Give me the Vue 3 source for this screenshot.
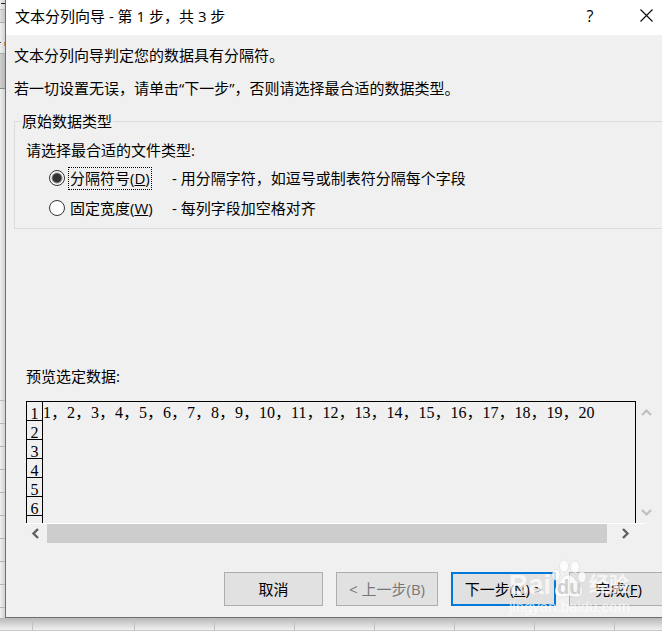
<script setup>
import { ref } from 'vue'

const fileType = ref('delimited')
const rows = [1, 2, 3, 4, 5, 6]
const preview = Array.from({ length: 20 }, (_, i) => i + 1).join('，')
</script>

<template>
  <div class="sheet">
    <div class="edge">
      <span class="ribbon"></span>
      <span class="tab"></span>
      <span class="formula"></span>
      <span class="header"></span>
      <span class="blank"></span>
      <span class="cells"></span>
    </div>
    <main class="dialog" role="dialog" aria-labelledby="title">
      <header class="titlebar">
        <h1 id="title">文本分列向导 - 第 1 步，共 3 步</h1>
        <button class="cap help" aria-label="帮助">?</button>
        <button class="cap" aria-label="关闭">
          <svg width="13" height="13" viewBox="0 0 13 13"><path d="M.5.5l12 12M12.5.5l-12 12" fill="none" stroke="#111" stroke-width="1.2" /></svg>
        </button>
      </header>
      <p class="intro">文本分列向导判定您的数据具有分隔符。</p>
      <p class="intro">若一切设置无误，请单击“下一步”，否则请选择最合适的数据类型。</p>

      <fieldset class="group">
        <legend>原始数据类型</legend>
        <p class="prompt">请选择最合适的文件类型:</p>
        <div class="choice">
          <input id="delimited" v-model="fileType" type="radio" name="type" value="delimited" />
          <label for="delimited" class="focused">分隔符号(<u>D</u>)</label>
          <span>- 用分隔字符，如逗号或制表符分隔每个字段</span>
        </div>
        <div class="choice">
          <input id="fixed" v-model="fileType" type="radio" name="type" value="fixed" />
          <label for="fixed">固定宽度(<u>W</u>)</label>
          <span>- 每列字段加空格对齐</span>
        </div>
      </fieldset>

      <section class="preview">
        <h2>预览选定数据:</h2>
        <div class="viewer">
          <div class="pane">
            <table>
              <tbody>
                <tr v-for="n in rows" :key="n">
                  <th>{{ n }}</th>
                  <td>{{ n === 1 ? preview : '' }}</td>
                </tr>
                <tr><th></th><td></td></tr>
              </tbody>
            </table>
          </div>
          <div class="vscroll">
            <button aria-label="向上滚动"><svg width="11" height="9" viewBox="0 0 11 9"><path d="M1 7l4.500-4.500L10 7" fill="none" stroke="#bfbfbf" stroke-width="2.200" /></svg></button>
            <button aria-label="向下滚动"><svg width="11" height="9" viewBox="0 0 11 9"><path d="M1 2l4.500 4.500L10 2" fill="none" stroke="#bfbfbf" stroke-width="2.200" /></svg></button>
          </div>
        </div>
        <div class="hscroll">
          <button aria-label="向左滚动"><svg width="9" height="11" viewBox="0 0 9 11"><path d="M7 1L2.500 5.500L7 10" fill="none" stroke="#606060" stroke-width="2.400" /></svg></button>
          <div class="thumb"></div>
          <button aria-label="向右滚动"><svg width="9" height="11" viewBox="0 0 9 11"><path d="M2 1l4.500 4.500L2 10" fill="none" stroke="#606060" stroke-width="2.400" /></svg></button>
        </div>
      </section>

      <footer class="actions">
        <button class="btn cancel">取消</button>
        <button class="btn back" disabled>&lt; 上一步(B)</button>
        <button class="btn next">下一步(<u>N</u>) &gt;</button>
        <button class="btn finish">完成(<u>F</u>)</button>
      </footer>
    </main>
    <div class="bottom-cells"></div>

    <div class="watermark" aria-hidden="true">
      <div class="brand">
        <span>Bai</span>
        <svg width="36" height="40" viewBox="0 0 36 40">
          <ellipse cx="5" cy="16" rx="4" ry="5.500" />
          <ellipse cx="13" cy="7" rx="4.500" ry="6" />
          <ellipse cx="24" cy="8" rx="4.500" ry="6" />
          <ellipse cx="31" cy="18" rx="4" ry="5.500" />
          <path d="M17 16c-5 0-6 5-10 9c-5 5-4 13 3 13c4 0 5-1 8-1c3 0 4 1 8 1c7 0 7-9 2-13c-4-4-6-9-11-9z" />
          <text x="6" y="35">du</text>
        </svg>
        <span class="cn">经验</span>
      </div>
      <div class="site">jingyan.baidu.com</div>
    </div>
  </div>
</template>

<style>
body { overflow: hidden; background: #fff; }
</style>

<style scoped>
* { box-sizing: border-box; }
.sheet {
  position: relative;
  display: grid;
  grid-template-columns: 5px minmax(0, 1fr);
  overflow: hidden;
  background: #f1f1f1;
  color: #000;
  font: 15px/20px "Open Sans", "Noto Sans CJK SC", sans-serif;
}
h1, h2, p { margin: 0; font-size: 15px; font-weight: 400; }
button { font: inherit; color: inherit; padding: 0; border: 0; background: none; }
.edge { display: flex; flex-direction: column; overflow: hidden; background: linear-gradient(90deg, #efefef, #d2d2d2); }
.ribbon { height: 10px; border-bottom: 1px solid #bbb; background: linear-gradient(#222, #222) 1px 3px / 4px 1px no-repeat; }
.tab { height: 13px; background: #0001; border-bottom: 1px solid #aaa; }
.formula { height: 31px; border-bottom: 1px solid #aaa; background: linear-gradient(#c68a4a, #c68a4a) 4px 19px / 1px 4px no-repeat, linear-gradient(#345, #345) 0 19px / 1px 1px no-repeat; }
.header { height: 35px; background: #0002; border-bottom: 1px solid #888; }
.blank { height: 312px; border-bottom: 1px solid #bcbcbc; }
.cells { flex: 1; background: repeating-linear-gradient(transparent 0 22px, #b6b6b6 22px 23px); }
.dialog {
  background: #f0f0f0;
  border-left: 1px solid #6f6f6f;
  border-bottom: 1px solid #6f6f6f;
}
.titlebar { display: flex; align-items: center; height: 35px; padding-left: 9px; background: #fff; }
.titlebar h1 { flex: 1; padding-bottom: 4px; }
.cap { display: grid; place-items: center; width: 31px; height: 31px; margin-bottom: 4px; }
.help { width: 82px; font-size: 16px; }
.intro { padding: 10px 8px 3px; white-space: nowrap; }
.group { margin: 10px 0 0 8px; padding: 9px 0 8px 11px; min-width: 0; border: 1px solid #dcdcdc; border-right: 0; white-space: nowrap; }
legend { margin-left: -5px; padding: 0 1px; line-height: 20px; }
.prompt { margin-bottom: 6px; }
.choice { display: grid; grid-template-columns: 20px 103px 1fr; align-items: center; height: 24px; margin: 0 0 6px 23px; }
.choice:last-child { margin-bottom: 0; }
.choice input { appearance: none; width: 16px; height: 16px; margin: 0; border: 1px solid #333; border-radius: 50%; background: #fff; }
.choice input:checked { background: radial-gradient(circle, #333 0 4px, #fff 6px); }
.choice label { justify-self: start; line-height: 21px; padding: 0 1px; border: 1px solid transparent; margin-left: -1px; }
.choice .focused { border: 1px dotted #000; }
.preview { padding: 137px 0 0 20px; }
.viewer { display: flex; margin-top: 15px; }
.pane { flex: 1; height: 122px; overflow: hidden; border: 1px solid #000; border-bottom: 0; }
table { width: 100%; border-spacing: 0; font: 16px/18px "Liberation Serif", "Noto Sans CJK SC", serif; }
tr { height: 19px; }
th { width: 16px; padding: 6px 0 0; border-right: 1px solid #000; border-bottom: 1px solid #000; font-weight: 400; line-height: 12px; }
td { padding: 2px 0 0; line-height: 17px; white-space: nowrap; }
.vscroll { display: flex; flex-direction: column; justify-content: space-between; width: 26px; padding: 0 5px 0 0; }
.vscroll button { height: 22px; display: grid; place-items: center; }
.hscroll { display: flex; height: 20px; margin-right: 17px; border-top: 1px solid #fff; }
.hscroll button { display: grid; place-items: center; width: 21px; padding-right: 2px; }
.hscroll button:last-child { width: 38px; }
.thumb { flex: 1; background: #cdcdcd; }
.actions { display: flex; gap: 13px; justify-content: flex-end; margin-right: -6px; padding: 29px 0 11px; }
.btn { height: 34px; flex: none; border: 1px solid #adadad; background: #e1e1e1; white-space: nowrap; }
.cancel, .finish { width: 99px; }
.back { width: 102px; color: #777; }
.next { width: 105px; border: 2px solid #0078d7; }
.bottom-cells {
  grid-column: 1 / -1;
  height: 13px;
  border-bottom: 1px solid #c6c6c6;
  background: repeating-linear-gradient(90deg, transparent 0 79px, #c2c2c2 79px 80px) 55px 0, linear-gradient(#b8b8b8, #f1f1f1);
}
.watermark { position: absolute; right: 32px; bottom: 16px; width: 121px; color: #ffffffb8; pointer-events: none; }
.brand { display: flex; align-items: flex-end; height: 40px; font: bold 27px/28px "Liberation Sans", "Noto Sans CJK SC", sans-serif; }
.brand svg { fill: #ffffffc0; stroke: #0001; flex: none; }
.brand text { font-size: 20px; fill: #cfcfcf; stroke: none; }
.cn { font-size: 20px; margin-left: 2px; white-space: nowrap; }
.site { font: 15px/16px "Liberation Sans", sans-serif; }
</style>
